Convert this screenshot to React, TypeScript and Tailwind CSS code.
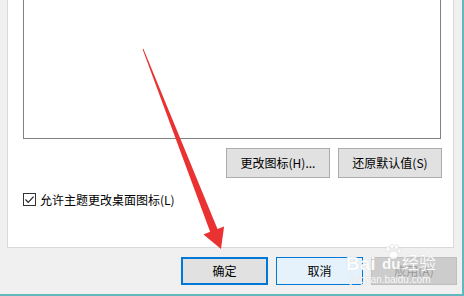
import React from 'react';

const font = { fontFamily: '"Microsoft YaHei UI", "Noto Sans CJK SC", "Noto Sans", sans-serif' };

const WinButton: React.FC<{ label: string; width: string }> = ({ label, width }) => (
  <button
    type="button"
    className={`${width} h-[30px] border border-[#adadad] bg-[#e1e1e1] text-[12px] text-black`}
  >
    {label}
  </button>
);

export default function App() {
  return (
    <div
      className="relative w-[464px] h-[296px] overflow-hidden bg-[#f0f0f0] border-r-2 border-b-2 border-[#62b8bc]"
      style={font}
    >
      {/* Tab panel */}
      <div className="ml-[7px] w-[447px] h-[248px] bg-white border-x border-b border-[#d9d9d9] pl-[15px]">
        {/* Icon list box (top cut off) */}
        <div className="w-[418px] h-[139px] border-x border-b border-[#828282] bg-white" />

        <div className="w-[419px] mt-[9px] flex justify-end gap-[8px]">
          <WinButton label="更改图标(H)..." width="w-[104px]" />
          <WinButton label="还原默认值(S)" width="w-[104px]" />
        </div>

        <label className="mt-[15px] flex items-center gap-[4px] text-[12px] text-black leading-none">
          <span className="w-[13px] h-[13px] border border-[#333] bg-white flex items-center justify-center">
            <svg width="11" height="11" viewBox="0 0 11 11">
              <polyline points="1.5,5.5 4.2,8.3 9.6,2.6" fill="none" stroke="#222" strokeWidth="1.2" />
            </svg>
          </span>
          允许主题更改桌面图标(L)
        </label>
      </div>

      {/* Dialog buttons */}
      <div className="ml-[181px] mt-[9px] flex gap-[8px]">
        <button type="button" className="w-[87px] h-[28px] border-2 border-[#0078d7] bg-[#e1e1e1] text-[12px] text-black">
          确定
        </button>
        <button type="button" className="w-[87px] h-[28px] border border-[#0078d7] bg-[#e5f1fb] text-[12px] text-black">
          取消
        </button>
        <button type="button" className="w-[86px] h-[28px] border border-[#bfbfbf] bg-[#cccccc] text-[12px] text-[#9a9a9a]">
          应用(A)
        </button>
      </div>

      {/* Red annotation arrow */}
      <svg className="absolute left-0 top-0" width="464" height="296" viewBox="0 0 464 296">
        <polygon
          points="142.6,49.2 143.4,48.8 217.5,229 224.1,226.4 221,249 203.5,234.4 210.1,231.8"
          fill="#ea3232"
        />
      </svg>

      {/* Baidu watermark */}
      <div className="absolute left-[346px] top-[244px] w-[92px] h-[44px] text-white opacity-90 pointer-events-none">
        <svg className="absolute left-[38px] top-0" width="18" height="16" viewBox="0 0 18 16">
          <g fill="#ffffff" stroke="#d8d8d8" strokeWidth="0.6">
            <ellipse cx="4" cy="5" rx="2" ry="2.6" />
            <ellipse cx="8" cy="2.6" rx="2" ry="2.4" />
            <ellipse cx="12.5" cy="3" rx="2" ry="2.4" />
            <ellipse cx="15.5" cy="7" rx="1.8" ry="2.2" />
            <ellipse cx="9.5" cy="11" rx="4.5" ry="4" />
          </g>
        </svg>
        <span
          className="absolute left-0 top-[10px] text-[19px] font-bold leading-none"
          style={{ fontFamily: '"Liberation Sans", sans-serif', textShadow: '0 0 1px #c8c8c8' }}
        >
          Bai
        </span>
        <span
          className="absolute left-[36px] top-[12px] text-[15px] font-bold leading-none"
          style={{ fontFamily: '"Liberation Sans", sans-serif', textShadow: '0 0 1px #c8c8c8' }}
        >
          du
        </span>
        <span className="absolute left-[56px] top-[9px] text-[17px] leading-none" style={{ textShadow: '0 0 1px #c8c8c8' }}>
          经验
        </span>
        <span
          className="absolute left-[4px] top-[31px] text-[10px] leading-none"
          style={{ fontFamily: '"Liberation Sans", sans-serif', textShadow: '0 0 1px #c8c8c8' }}
        >
          jingyan.baidu.com
        </span>
      </div>
    </div>
  );
}
